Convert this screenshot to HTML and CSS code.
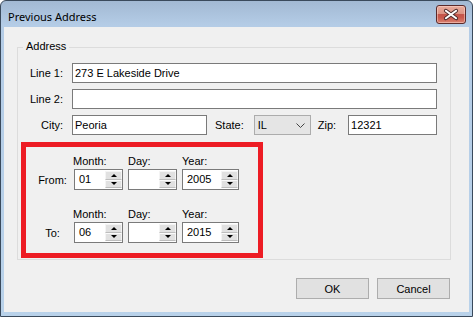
FILE: index.html
```html
<!DOCTYPE html>
<html lang="en">
<head>
  <meta charset="UTF-8" />
  <title>Previous Address</title>
  <link rel="stylesheet" href="styles.css">
</head>
<body>
  <div class="window">
    <div class="titlebar">
      <span class="title">Previous Address</span>
      <button class="close" aria-label="Close">
        <svg width="30" height="19" viewBox="0 0 30 19">
          <path d="M9.5 5.5 L20.5 13.5 M20.5 5.5 L9.5 13.5" stroke="#4a2a2a" stroke-width="4.2" stroke-linecap="round"/>
          <path d="M9.5 5.5 L20.5 13.5 M20.5 5.5 L9.5 13.5" stroke="#fff" stroke-width="2.2" stroke-linecap="round"/>
        </svg>
      </button>
    </div>

    <div class="client">
      <div class="group">
        <span class="legend">Address</span>

        <div class="row">
          <label>Line 1:</label>
          <div class="textbox wide">273 E Lakeside Drive</div>
        </div>
        <div class="row">
          <label>Line 2:</label>
          <div class="textbox wide"></div>
        </div>
        <div class="row last">
          <label>City:</label>
          <div class="textbox city">Peoria</div>
          <span class="state-label">State:</span>
          <div class="combo">
            <span>IL</span>
            <svg width="9" height="5" viewBox="0 0 9 5"><polyline points="0.5,0.5 4.5,4.5 8.5,0.5" fill="none" stroke="#444" stroke-width="1"/></svg>
          </div>
          <span class="zip-label">Zip:</span>
          <div class="textbox wide zip">12321</div>
        </div>

        <div class="dates">
          <div class="daterow">
            <span class="head">Month:</span>
            <span class="head">Day:</span>
            <span class="head">Year:</span>
            <span class="side">From:</span>
            <div class="spin"><span class="val">01</span><span class="arrows"><i class="up"></i><i class="down"></i></span></div>
            <div class="spin"><span class="val"></span><span class="arrows"><i class="up"></i><i class="down"></i></span></div>
            <div class="spin"><span class="val">2005</span><span class="arrows"><i class="up"></i><i class="down"></i></span></div>
          </div>
          <div class="daterow second">
            <span class="head">Month:</span>
            <span class="head">Day:</span>
            <span class="head">Year:</span>
            <span class="side">To:</span>
            <div class="spin"><span class="val">06</span><span class="arrows"><i class="up"></i><i class="down"></i></span></div>
            <div class="spin"><span class="val"></span><span class="arrows"><i class="up"></i><i class="down"></i></span></div>
            <div class="spin"><span class="val">2015</span><span class="arrows"><i class="up"></i><i class="down"></i></span></div>
          </div>
        </div>
      </div>

      <div class="buttons">
        <button class="btn">OK</button>
        <button class="btn">Cancel</button>
      </div>
    </div>
  </div>
</body>
</html>
```

FILE: styles.css
```css
* {
  box-sizing: border-box;
  margin: 0;
  padding: 0;
}

body {
  font-family: "Liberation Sans", Arial, sans-serif;
  font-size: 11px;
  color: #000;
  background: #fff;
}

.window {
  width: 473px;
  height: 317px;
  border: 1px solid #3a4a5c;
  border-radius: 6px 6px 0 0;
  background: linear-gradient(#a2b9d3, #b4cce6 24px, #b9d2ea);
  padding: 0 3px 4px;
  display: flex;
  flex-direction: column;
}

.titlebar {
  height: 26px;
  display: flex;
  justify-content: space-between;
  align-items: flex-start;
}

.title {
  font-family: "Noto Sans", "Open Sans", sans-serif;
  font-size: 11px;
  line-height: 15px;
  padding: 8px 0 0 4px;
}

.close {
  width: 30px;
  height: 19px;
  margin: 4px 3px 0 0;
  border: 1px solid #5b2a2a;
  border-radius: 3px;
  background: linear-gradient(#e8ab9c, #dd9484 45%, #c4554a 50%, #c9594c 68%, #da8272);
  display: flex;
  align-items: center;
  justify-content: center;
  box-shadow: inset 0 0 0 1px rgba(255, 220, 210, 0.5);
}

.close svg {
  display: block;
}

.client {
  flex: 1;
  background: #f0f0f0;
  display: flex;
  flex-direction: column;
}

.group {
  position: relative;
  margin: 20px 18px 0 13px;
  border: 1px solid #dcdcdc;
  padding: 15px 13px 1px 0;
}

.legend {
  position: absolute;
  left: 5px;
  top: -8px;
  padding: 0 3px;
  background: #f0f0f0;
  line-height: 13px;
}

.row {
  display: flex;
  align-items: center;
  height: 20px;
  margin-bottom: 6px;
}

.row.last {
  margin-bottom: 7px;
}

.row label {
  width: 54px;
  text-align: right;
  padding-right: 9px;
}

.textbox {
  height: 20px;
  border: 1px solid #7a7a7a;
  background: #fff;
  padding-left: 2px;
  line-height: 18px;
}

.wide {
  flex: 1;
}

.city {
  width: 135px;
}

.state-label {
  margin-left: 8px;
}

.combo {
  width: 57px;
  height: 20px;
  margin-left: 10px;
  border: 1px solid #acacac;
  background: #e5e5e5;
  padding: 0 5px 0 3px;
  display: flex;
  align-items: center;
  justify-content: space-between;
}

.combo svg {
  display: block;
}

.zip-label {
  margin-left: 7px;
}

.zip {
  margin-left: 12px;
}

.dates {
  width: 242px;
  height: 116px;
  margin-left: 3px;
  border: 5px solid #ed1c24;
  padding-top: 8px;
}

.daterow {
  display: grid;
  grid-template-columns: 43px 49px 49px 57px;
  grid-template-rows: 13px 21px;
  column-gap: 5px;
  row-gap: 1px;
}

.daterow.second {
  margin-top: 18px;
}

.head {
  line-height: 13px;
}

.head:first-child {
  grid-column: 2;
  margin-left: -1px;
}

.side {
  grid-column: 1;
  grid-row: 2;
  align-self: center;
  text-align: center;
  padding-left: 10px;
}

.spin {
  display: flex;
  border: 1px solid #7a7a7a;
  background: #fff;
}

.spin .val {
  flex: 1;
  padding-left: 4px;
  line-height: 19px;
}

.arrows {
  width: 17px;
  display: flex;
  flex-direction: column;
  padding: 1px 0 1px 0;
}

.arrows i {
  flex: 1;
  background: #e1e1e1;
  border: 1px solid #f4f4f4;
  border-bottom-color: #bdbdbd;
  display: flex;
  align-items: center;
  justify-content: center;
}

.arrows i.down {
  border-top-color: #fafafa;
}

.arrows i.up::after {
  content: "";
  border-left: 3px solid transparent;
  border-right: 3px solid transparent;
  border-bottom: 3px solid #000;
}

.arrows i.down::after {
  content: "";
  border-left: 3px solid transparent;
  border-right: 3px solid transparent;
  border-top: 3px solid #000;
}

.buttons {
  display: flex;
  justify-content: flex-end;
  gap: 8px;
  margin-top: 18px;
  padding-right: 19px;
}

.btn {
  width: 73px;
  height: 21px;
  border: 1px solid #adadad;
  background: #e1e1e1;
  font: inherit;
  color: #000;
}
```
